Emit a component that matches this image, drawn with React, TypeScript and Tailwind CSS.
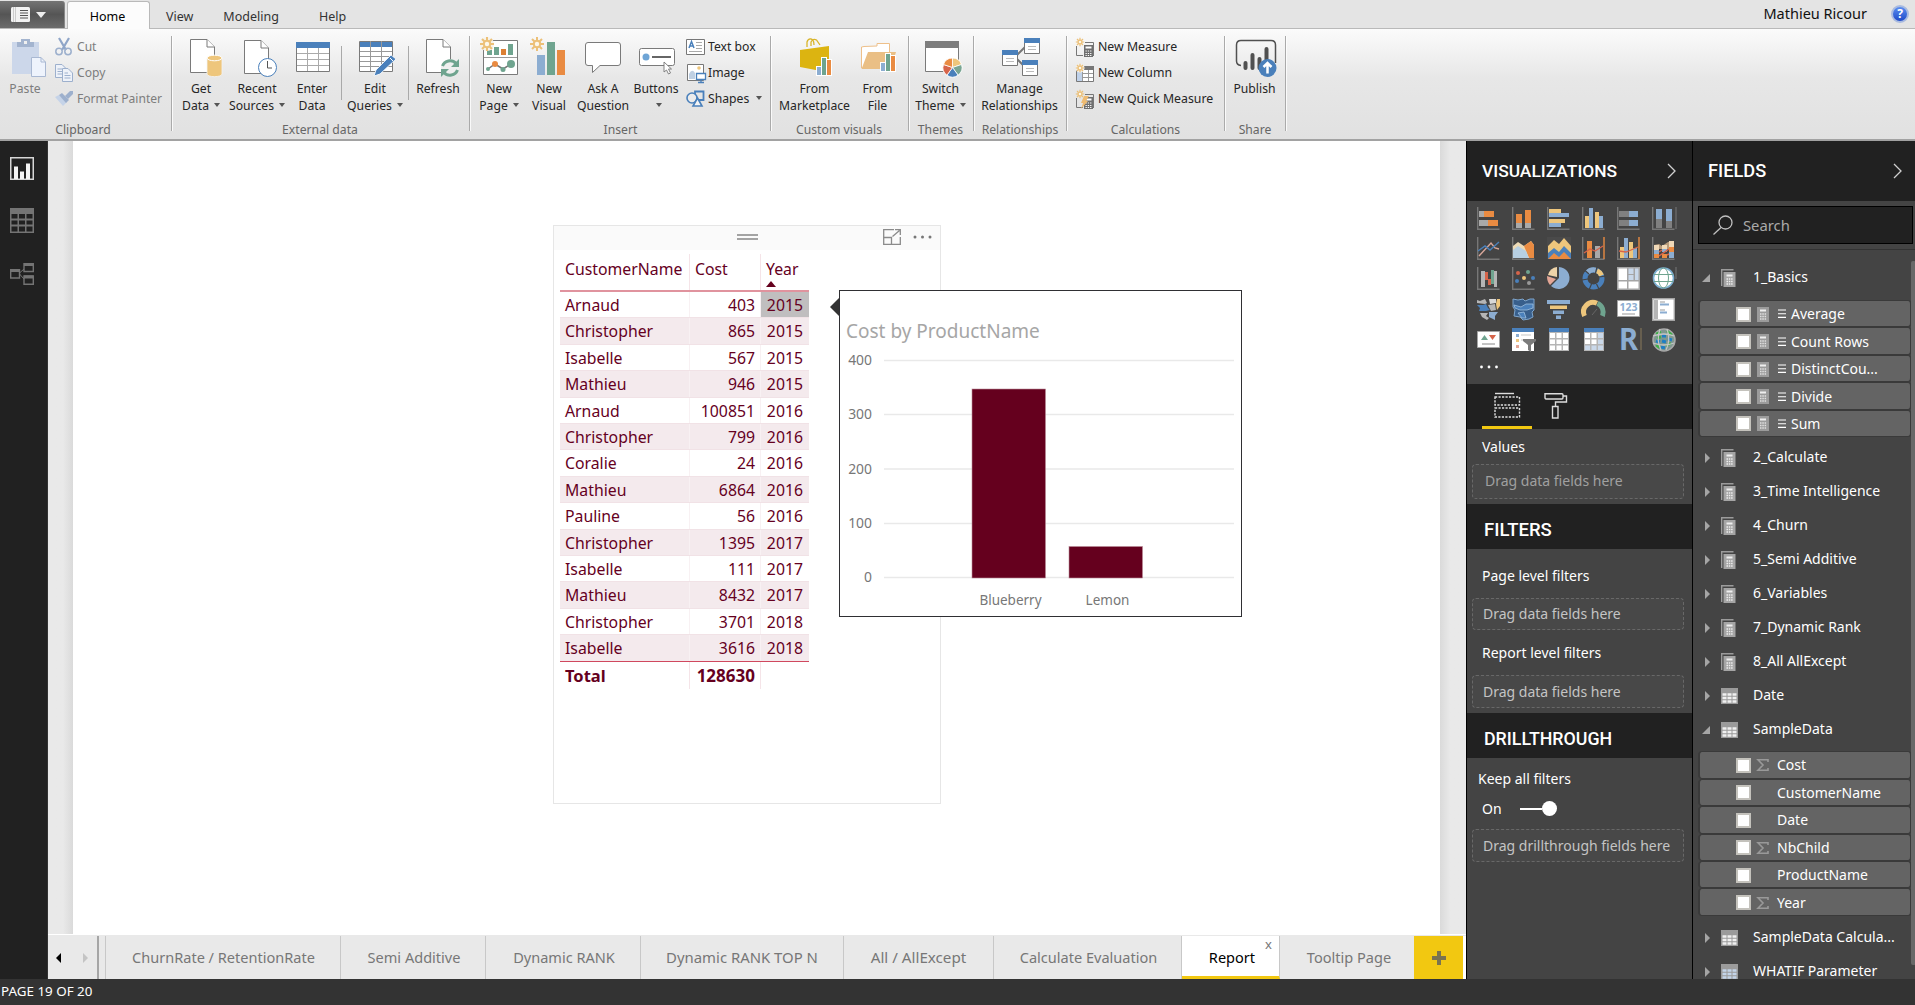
import React from "react";

type Kids = { children?: React.ReactNode };

/* ---------- shared drawing pieces ---------- */

const BLUE = "#4a80bb";
const LBLUE = "#8cadd1";
const ORANGE = "#e98b42";
const SAND = "#eec67c";
const GREEN = "#6fa48f";

function Ico({ w = 40, h = 40, children }: Kids & { w?: number; h?: number }) {
  return (
    <svg width={w} height={h} viewBox={`0 0 ${w} ${h}`} fill="none" className="shrink-0 overflow-visible">
      {children}
    </svg>
  );
}

function Doc({ x, y }: { x: number; y: number }) {
  return (
    <g transform={`translate(${x} ${y})`}>
      <path d="M.5 .5H17L24.5 8V33.5H.5Z" fill="#fff" stroke="#7a7a7a" />
      <path d="M17 .5V8H24.5" stroke="#7a7a7a" fill="#fff" />
    </g>
  );
}

function Sun({ x, y, s = 1 }: { x: number; y: number; s?: number }) {
  return (
    <g transform={`translate(${x} ${y}) scale(${s})`} stroke="#ecc078" strokeWidth="2">
      <path d="M0 -7V7M-7 0H7M-5 -5L5 5M-5 5L5 -5" />
      <circle r="3.2" fill="#fdf7ea" />
    </g>
  );
}

function Bars({ x, y }: { x: number; y: number }) {
  return (
    <g transform={`translate(${x} ${y})`}>
      <path d="M-1 8H4V-1H10V1H15V18H-1Z" fill="#fff" />
      <path d="M0 9H4V17H0Z" fill={LBLUE} />
      <path d="M5 0H9V17H5Z" fill={GREEN} />
      <path d="M10 2H14V17H10Z" fill={ORANGE} />
    </g>
  );
}

/* ---------- ribbon icons ---------- */

const PasteIcon = () => (
  <Ico>
    <path d="M7 5H34V37H7Z" fill="#ccd7ea" />
    <path d="M12 5V10H29V5H25V2H16V5Z" fill="#a3b4cf" />
    <path d="M19 4H22V7H19Z" fill="#f0f0f0" />
    <path d="M26.500 20.500H36L40.500 25V39.500H26.500Z" fill="#eef3fc" stroke="#a9b8d2" />
    <path d="M36 20.500V25H40.500" stroke="#a9b8d2" />
  </Ico>
);
const GetDataIcon = () => (
  <Ico>
    <Doc x={9} y={2} />
    <path d="M26 21V37C26 40.500 41 40.500 41 37V21Z" fill={SAND} stroke="#f4f4f4" strokeWidth=".8" />
    <ellipse cx="33.500" cy="21" rx="7.500" ry="2.800" fill={SAND} stroke="#fff" />
  </Ico>
);
const RecentIcon = () => (
  <Ico>
    <Doc x={7} y={3} />
    <circle cx="30.500" cy="30.500" r="9" fill="#fff" stroke={BLUE} />
    <path d="M30.500 24V31H35" stroke="#555" />
  </Ico>
);
const EnterIcon = () => (
  <Ico>
    <path d="M4.500 10.500H37.500V34.500H4.500Z" fill="#fff" stroke="#7a7a7a" />
    <path d="M4 5H38V11H4Z" fill={BLUE} />
    <path d="M5 16.500H37M5 22.500H37M5 28.500H37M15.500 11V34M26.500 11V34" stroke="#aaa" />
  </Ico>
);
const EditIcon = () => (
  <Ico>
    <path d="M4.500 4.500H37.500V34.500H4.500Z" fill="#fff" stroke="#7a7a7a" />
    <path d="M5 5H37V10H5Z" fill={BLUE} />
    <path d="M5 14.500H37M5 19.500H37M5 24.500H37M5 29.500H37M15.500 4V34M26.500 4V34" stroke="#999" />
    <path d="M19 39L21 33L36 18L41 22L25 37Z" fill={BLUE} stroke="#fff" strokeWidth=".8" />
    <path d="M35 21L38 24" stroke="#fff" />
  </Ico>
);
const RefreshIcon = () => (
  <Ico>
    <Doc x={8} y={2} />
    <circle cx="32" cy="31" r="9" fill="#efefef" />
    <path d="M24.500 29A8 8 0 0 1 38 26.500M39.500 33A8 8 0 0 1 26 35.500" stroke={GREEN} strokeWidth="3" />
    <path d="M41 22V30H33ZM23 40V32H31Z" fill={GREEN} />
  </Ico>
);
const NewPageIcon = () => (
  <Ico>
    <path d="M4.500 3.500H38.500V37.500H4.500Z" fill="#fff" stroke="#7a7a7a" />
    <path d="M5 20.500H38" stroke="#999" />
    <path d="M8 13H13V18H8ZM15 10H20V18H15ZM29 7H34V18H29Z" fill={GREEN} />
    <path d="M22 12H27V18H22Z" fill="#dc8034" />
    <path d="M9 32L16 27L24 32L32 27" stroke="#777" strokeWidth="1.500" />
    <circle cx="9" cy="32" r="2" fill={GREEN} />
    <circle cx="16" cy="27" r="3" fill={ORANGE} />
    <circle cx="24" cy="32.500" r="2.500" fill={GREEN} />
    <circle cx="32" cy="27" r="4" fill={GREEN} />
    <circle cx="8" cy="7" r="7" fill="#f7f3ea" />
    <Sun x={8} y={7} />
  </Ico>
);
const NewVisualIcon = () => (
  <Ico>
    <path d="M8 18H16V38H8Z" fill={LBLUE} />
    <path d="M18 5H26V38H18Z" fill={GREEN} />
    <path d="M28 13H36V38H28Z" fill={ORANGE} />
    <Sun x={8} y={7} />
  </Ico>
);
const AskIcon = () => (
  <Ico>
    <path d="M5 5.500H35Q37.500 5.500 37.500 8V26Q37.500 28.500 35 28.500H17L9.500 35.500V28.500H5Q2.500 28.500 2.500 26V8Q2.500 5.500 5 5.500Z" fill="#fff" stroke="#7a7a7a" />
  </Ico>
);
const ButtonsIcon = () => (
  <Ico>
    <rect x="3.500" y="11.500" width="35" height="17" rx="2" fill="#fff" stroke="#7a7a7a" />
    <circle cx="10" cy="20" r="3.500" fill="#6fa5d6" />
    <path d="M16 20H35" stroke="#666" strokeWidth="2" />
    <path d="M28 25V35L30.500 33L32.500 37L34.500 36L32.500 32H35.500Z" fill="#fff" stroke="#777" strokeWidth=".9" />
  </Ico>
);
const MarketIcon = () => (
  <Ico>
    <path d="M12 10V5Q13 1.500 16 2Q19 2.500 19 8M16 9V5Q18 1 21.500 3L25 8" stroke="#d9b52b" strokeWidth="1.300" />
    <path d="M5 13L34 9V31L26 34L5 30Z" fill="#dcb411" />
    <Bars x={22} y={21} />
  </Ico>
);
const FileIcon = () => (
  <Ico>
    <path d="M3.500 31V10L6 9.500L19 9V6.500H31.500V16" fill="#fff" stroke="#eec08a" />
    <path d="M3.500 32L10 15H38L34 28V32Z" fill="#eabf85" />
    <Bars x={23} y={17} />
  </Ico>
);
const ThemeIcon = () => (
  <Ico>
    <path d="M4.500 4.500H37.500V34.500H4.500Z" fill="#fff" stroke="#7a7a7a" />
    <path d="M4 4H38V11H4Z" fill="#7d7d7d" />
    <circle cx="31.500" cy="30.500" r="10" fill="#fff" />
    <g transform="translate(31.5 30.500)" stroke="#fff" strokeWidth=".8">
      <path d="M0 0V-9.500A9.500 9.500 0 0 1 9 -3Z" fill={SAND} />
      <path d="M0 0L9 -3A9.500 9.500 0 0 1 5.600 7.700Z" fill="#79a593" />
      <path d="M0 0L5.600 7.700A9.500 9.500 0 0 1 -5.600 7.700Z" fill={BLUE} />
      <path d="M0 0L-5.600 7.700A9.500 9.500 0 0 1 -9 -3Z" fill="#d6644a" />
      <path d="M0 0L-9 -3A9.500 9.500 0 0 1 0 -9.500Z" fill={ORANGE} />
    </g>
  </Ico>
);
function RelBox({ x, y }: { x: number; y: number }) {
  return (
    <g transform={`translate(${x} ${y})`}>
      <path d="M.5 .5H15.500V15.500H.5Z" fill="#fff" stroke="#777" />
      <path d="M0 0H16V5H0Z" fill={BLUE} />
      <path d="M4 8.500H12M4 11.500H12" stroke="#bbb" />
    </g>
  );
}
const ManageIcon = () => (
  <Ico>
    <path d="M17 18L25 10M17 22L24 29" stroke="#777" strokeWidth="2" />
    <RelBox x={24} y={1} />
    <RelBox x={2} y={13} />
    <RelBox x={22} y={23} />
  </Ico>
);
const PublishIcon = () => (
  <Ico>
    <path d="M6 28.500Q1.500 28 1.500 24V8Q1.500 3.500 6 3.500H36Q40.500 3.500 40.500 8V26" stroke="#505050" strokeWidth="1.500" />
    <path d="M10.500 26V31M17.500 18V31M24.500 22V31M31.500 12V31" stroke="#505050" strokeWidth="4" strokeLinecap="round" />
    <circle cx="32.500" cy="31" r="9" fill={BLUE} />
    <path d="M32.500 36.500V26.500M28.500 30L32.500 26L36.500 30" stroke="#fff" strokeWidth="2.500" />
  </Ico>
);

const CutIcon = () => (
  <Ico w={18} h={18}>
    <path d="M4 0L11 12M14 0L7 12" stroke="#8fa5c8" strokeWidth="2.200" />
    <circle cx="4" cy="13.500" r="3.200" stroke="#9db0cd" strokeWidth="1.500" />
    <circle cx="13" cy="13.500" r="3.200" stroke="#9db0cd" strokeWidth="1.500" />
  </Ico>
);
const CopyIcon = () => (
  <Ico w={18} h={18}>
    <path d="M.5 .5H7L10.500 4V13.500H.5Z" fill="#eef2f9" stroke="#9db0cd" />
    <path d="M2.500 5H7M2.500 7.500H7M2.500 10H7" stroke="#9db0cd" />
    <path d="M7.500 4.500H13L17.500 9V17.500H7.500Z" fill="#eef2f9" stroke="#9db0cd" />
    <path d="M9.500 9H13M9.500 11.500H15.500M9.500 14H15.500" stroke="#9db0cd" />
  </Ico>
);
const PainterIcon = () => (
  <Ico w={18} h={18}>
    <path d="M0 7L8 16L12 12L4 5Z" fill="#c5d3e8" />
    <path d="M4 5L7 3L14 10L11 13Z" fill="#9db0cd" />
    <path d="M10 6L15 1H18V4L13 9Z" fill="#9db0cd" />
  </Ico>
);
const TextBoxIcon = () => (
  <Ico w={19} h={17}>
    <path d="M.5 .5H18.500V15.500H.5Z" fill="#fff" stroke="#777" />
    <path d="M3 9L5.500 2.500L8 9M4 7H7" stroke={BLUE} strokeWidth="1.500" />
    <path d="M10 3.500H16M10 6.500H16M10 9.500H16M3 12.500H16" stroke="#aaa" />
  </Ico>
);
const ImageIcon = () => (
  <Ico w={19} h={19}>
    <path d="M1.500 .5H17.500V16.500H1.500Z" fill="#fff" stroke="#777" />
    <circle cx="13" cy="4" r="1.800" fill={SAND} />
    <path d="M3 15V10Q6 4 9 9V15Z" fill="#bfd0e3" />
    <path d="M10.500 9.500H19.500V15.500H10.500Z" fill="#fff" stroke={BLUE} strokeWidth="1.300" />
    <path d="M15 16V18.500M12 18.500H18" stroke={BLUE} strokeWidth="1.300" />
  </Ico>
);
const ShapesIcon = () => (
  <Ico w={19} h={18}>
    <path d="M9 1.500H17.500V10H9Z" stroke={BLUE} strokeWidth="1.800" />
    <circle cx="6" cy="8" r="5" fill="#ececec" stroke={BLUE} strokeWidth="1.600" />
    <path d="M11.500 8L16 16H7Z" fill="#f4f4f4" stroke={BLUE} strokeWidth="1.600" />
  </Ico>
);
function Calc({ x, y }: { x: number; y: number }) {
  return (
    <g transform={`translate(${x} ${y})`}>
      <path d="M0 0H9V12H0Z" fill="#6f6f6f" />
      <path d="M1.500 1.500H7.500V3.500H1.500Z" fill="#fff" />
      <path d="M1.500 6H7.500M1.500 8.500H7.500M1.500 10.500H7.500" stroke="#fff" strokeWidth="1.200" strokeDasharray="1.300 1" />
    </g>
  );
}
const MeasureIcon = () => (
  <Ico w={18} h={19}>
    <path d="M.5 8V17.500H7M9 4.500H17.500V18" stroke="#777" />
    <Calc x={8} y={7} />
    <Sun x={4} y={4} s={0.6} />
  </Ico>
);
const ColumnIcon = () => (
  <Ico w={18} h={19}>
    <path d="M.5 2.500H17.500V17.500H.5Z" fill="#fff" stroke="#777" />
    <path d="M1 6H6V17H1Z" fill="#c0d2ea" />
    <path d="M6 2H18V6H6Z" fill="#777" />
    <path d="M6.500 6V17M12.500 6V17M7 9.500H17M7 13.500H17" stroke="#999" />
    <circle cx="4" cy="4" r="4.500" fill="#f2f0ec" />
    <Sun x={4} y={4} s={0.6} />
  </Ico>
);
const QuickIcon = () => (
  <Ico w={18} h={19}>
    <path d="M.5 8V17.500H7M9 4.500H17.500V18" stroke="#777" />
    <Calc x={8} y={7} />
    <path d="M8 6L13 6L10 11H12L5 19L7 13H5Z" fill="#eebb72" />
    <Sun x={4} y={4} s={0.6} />
  </Ico>
);

/* ---------- ribbon ---------- */

const Caret = () => <span className="ml-[5px] inline-block h-0 w-0 border-x-[3px] border-t-4 border-x-transparent border-t-[#555] align-[3px]" />;

function Big({ icon, a, b, caret, w, dim }: { icon: React.ReactNode; a: string; b?: string; caret?: boolean; w: string; dim?: boolean }) {
  return (
    <div className={`flex shrink-0 flex-col items-center pt-[8px] whitespace-nowrap ${w} ${dim ? "text-[#7d7d7d]" : ""}`}>
      {icon}
      <div className="mt-[3px] h-[17px] leading-[17px]">{a}</div>
      <div className="h-[17px] leading-[17px]">
        {b}
        {caret && <Caret />}
      </div>
    </div>
  );
}

function Small({ icon, t, caret }: { icon: React.ReactNode; t: string; caret?: boolean }) {
  return (
    <div className="flex h-[26px] items-center whitespace-nowrap">
      <span className="mr-[3px] flex w-[19px] items-center">{icon}</span>
      {t}
      {caret && <span className="ml-[2px]"><Caret /></span>}
    </div>
  );
}

function Group({ label, w, pad = "", children }: Kids & { label: string; w: string; pad?: string }) {
  return (
    <div className={`flex shrink-0 items-start ${w}`}>
      <div className="flex min-w-0 flex-1 flex-col">
        <div className="flex h-[91px]">{children}</div>
        <div className={`mt-[1px] text-center leading-[18px] text-[#666] ${pad}`}>{label}</div>
      </div>
      <div className="mt-[7px] h-[95px] w-[2px] border-l border-[#aaa] bg-white/80" />
    </div>
  );
}

const Sep = () => <div className="mx-[2px] mt-[17px] h-[54px] w-px shrink-0 bg-[#a9a9a9]" />;

function Ribbon() {
  return (
    <div className="flex h-[113px] shrink-0 border-t border-b-2 border-t-[#b9b9b9] border-b-[#a2a2a2] bg-gradient-to-b from-[#fbfbfb] via-[#e7e7e7] via-45% to-[#e1e1e1] text-[12.2px] text-[#262626]">
      <Group label="Clipboard" w="w-[173px]" pad="pr-[5px]">
        <Big w="w-[50px]" dim icon={<PasteIcon />} a="Paste" />
        <div className="ml-[5px] pt-[5px] text-[12.1px] text-[#7d7d7d]">
          <Small icon={<CutIcon />} t="Cut" />
          <Small icon={<CopyIcon />} t="Copy" />
          <Small icon={<PainterIcon />} t="Format Painter" />
        </div>
      </Group>
      <Group label="External data" w="w-[298px]" pad="pr-[2px]">
        <Big w="w-[56px]" icon={<GetDataIcon />} a="Get" b="Data" caret />
        <Big w="w-[56px]" icon={<RecentIcon />} a="Recent" b="Sources" caret />
        <Big w="w-[54px]" icon={<EnterIcon />} a="Enter" b="Data" />
        <Sep />
        <Big w="w-[62px]" icon={<EditIcon />} a="Edit" b="Queries" caret />
        <Sep />
        <Big w="w-[54px]" icon={<RefreshIcon />} a="Refresh" />
      </Group>
      <Group label="Insert" w="w-[301px]">
        <div className="w-[3px]" />
        <Big w="w-[50px]" icon={<NewPageIcon />} a="New" b="Page" caret />
        <Big w="w-[50px]" icon={<NewVisualIcon />} a="New" b="Visual" />
        <Big w="w-[58px]" icon={<AskIcon />} a="Ask A" b="Question" />
        <Big w="w-[48px]" icon={<ButtonsIcon />} a="Buttons" caret />
        <div className="ml-[6px] pt-[5px]">
          <Small icon={<TextBoxIcon />} t="Text box" />
          <Small icon={<ImageIcon />} t="Image" />
          <Small icon={<ShapesIcon />} t="Shapes" caret />
        </div>
      </Group>
      <Group label="Custom visuals" w="w-[138px]" pad="pr-[2px]">
        <Big w="w-[85px]" icon={<MarketIcon />} a="From" b="Marketplace" />
        <Big w="w-[41px]" icon={<FileIcon />} a="From" b="File" />
      </Group>
      <Group label="Themes" w="w-[65px]" pad="pr-[2px]">
        <Big w="w-[61px]" icon={<ThemeIcon />} a="Switch" b="Theme" caret />
      </Group>
      <Group label="Relationships" w="w-[93px]" pad="pr-[1px]">
        <Big w="w-[89px]" icon={<ManageIcon />} a="Manage" b="Relationships" />
      </Group>
      <Group label="Calculations" w="w-[158px]" pad="pr-px">
        <div className="ml-[8px] pt-[5px] text-[12.3px]">
          <Small icon={<MeasureIcon />} t="New Measure" />
          <Small icon={<ColumnIcon />} t="New Column" />
          <Small icon={<QuickIcon />} t="New Quick Measure" />
        </div>
      </Group>
      <Group label="Share" w="w-[61px]" pad="pr-px">
        <Big w="w-[57px]" icon={<PublishIcon />} a="Publish" />
      </Group>
    </div>
  );
}

function TopTabs() {
  return (
    <div className="flex h-[28px] shrink-0 bg-[#e4e4e4] text-[12.5px] leading-[33px] text-[#333]">
      <div className="mt-px flex w-[65px] items-center justify-center gap-[6px] rounded-tr-[3px] border-r border-[#888] bg-gradient-to-b from-[#747474] via-[#555] via-50% to-[#6c6c6c] pr-[8px]">
        <Ico w={19} h={15}>
          <rect width="19" height="15" rx="1.500" fill="#f2f2f2" />
          <path d="M2.500 0V15M4.500 0V15" stroke="#ccc" />
          <path d="M9 3.500H17M9 6H17M9 8.500H17M9 11H17" stroke="#555" strokeWidth="1.100" />
        </Ico>
        <span className="h-0 w-0 border-x-[5px] border-t-[6px] border-x-transparent border-t-[#eee]" />
      </div>
      <div className="relative z-10 mt-px ml-[2px] h-[28px] w-[83px] rounded-t-[3px] border border-b-0 border-[#b9b9b9] bg-[#fcfcfc] pr-[2px] text-center leading-[30px] text-black">Home</div>
      <div className="ml-[16px]">View</div>
      <div className="ml-[30px]">Modeling</div>
      <div className="ml-[40px]">Help</div>
      <div className="mr-[24px] ml-auto text-[14.5px] leading-[27px] text-[#111]">Mathieu Ricour</div>
      <div className="mt-[5px] mr-[6px] flex h-[18px] w-[18px] items-center justify-center rounded-full border-2 border-[#a9bbe0] bg-gradient-to-b from-[#5c8df0] to-[#1f49c8] text-[12px] leading-none font-bold text-white">?</div>
    </div>
  );
}

/* ---------- left navigation ---------- */

function LeftNav() {
  return (
    <div className="flex w-[48px] shrink-0 flex-col border-r border-[#333] bg-[#212121] pl-[10px]">
      <div className="mt-[16px] h-[51px]">
        <Ico w={24} h={23}>
          <rect x=".75" y=".75" width="22.500" height="21.500" stroke="#d6d6d6" strokeWidth="1.500" />
          <path d="M6 22V9.500M12 22V14.500M18 22V6.500" stroke="#f4f4f4" strokeWidth="4" />
        </Ico>
      </div>
      <div className="h-[54px]">
        <Ico w={24} h={25}>
          <path d="M0 0H24V25H0Z" fill="#747474" />
          <path d="M1.500 6H7.500V10.500H1.500ZM9 6H15V10.500H9ZM16.500 6H22.500V10.500H16.500ZM1.500 12.500H7.500V16.500H1.500ZM9 12.500H15V16.500H9ZM16.500 12.500H22.500V16.500H16.500ZM1.500 18.500H7.500V23.500H1.500ZM9 18.500H15V23.500H9ZM16.500 18.500H22.500V23.500H16.500Z" fill="#212121" />
        </Ico>
      </div>
      <Ico w={24} h={23}>
        <g stroke="#747474" strokeWidth="1.400">
          <path d="M.7 7.700H9.500V16H.7ZM14 1.700H23.300V9.500H14ZM14 14H23.300V22.300H14Z" />
          <path d="M.7 8.500H9.500M14 2.500H23.300M14 15H23.300" strokeWidth="3" />
          <path d="M9.500 11L14 7M9.500 12L14 17" strokeWidth="1" />
        </g>
      </Ico>
    </div>
  );
}

/* ---------- report canvas ---------- */

const ROWS: [string, string, string][] = [
  ["Arnaud", "403", "2015"],
  ["Christopher", "865", "2015"],
  ["Isabelle", "567", "2015"],
  ["Mathieu", "946", "2015"],
  ["Arnaud", "100851", "2016"],
  ["Christopher", "799", "2016"],
  ["Coralie", "24", "2016"],
  ["Mathieu", "6864", "2016"],
  ["Pauline", "56", "2016"],
  ["Christopher", "1395", "2017"],
  ["Isabelle", "111", "2017"],
  ["Mathieu", "8432", "2017"],
  ["Christopher", "3701", "2018"],
  ["Isabelle", "3616", "2018"],
];

function TableVisual() {
  return (
    <div className="absolute top-[84px] left-[480px] flex h-[579px] w-[388px] flex-col border border-[#e6e6e6] text-[15.8px] text-[#65001e]">
      <div className="flex h-[24px] items-center bg-[#fafafa] pr-[7px] pb-[2px]">
        <div className="ml-[183px] h-[6px] w-[21px] border-y-2 border-[#a3a3a3]" />
        <div className="ml-auto flex items-center gap-[12px]">
          <Ico w={18} h={16}>
            <path d="M11 .7H.7V15.300H17.300V8" stroke="#8a8a8a" strokeWidth="1.300" />
            <path d="M.7 8.500H8.500V15M9.500 7.500L16.500 1.500M12 .7H17.300V6" stroke="#8a8a8a" strokeWidth="1.300" />
          </Ico>
          <Ico w={20} h={4}>
            <circle cx="2" cy="2" r="1.500" fill="#777" />
            <circle cx="9.500" cy="2" r="1.500" fill="#777" />
            <circle cx="17" cy="2" r="1.500" fill="#777" />
          </Ico>
        </div>
      </div>
      <div className="mt-[4px] ml-[6px] w-[249px]">
        <div className="flex h-[38px] border-b-2 border-[#e0939e] leading-[30px]">
          <div className="w-[130px] border-r border-[#f5e4e8] pl-[5px]">CustomerName</div>
          <div className="w-[71px] border-r border-[#f5e4e8] pl-[5px]">Cost</div>
          <div className="relative pl-[5px]">
            Year
            <span className="absolute top-[27px] left-[5px] h-0 w-0 border-x-[5.5px] border-b-[6px] border-x-transparent border-b-[#65001e]" />
          </div>
        </div>
        {ROWS.map(([n, c, y], i) => (
          <div key={i} className={`flex h-[26.42px] border-b leading-[27.5px] ${i === 13 ? "border-[#d0485e]" : "border-[#f1e2e6]"} ${i % 2 ? "bg-[#f4eaed]" : "bg-white"}`}>
            <div className="w-[130px] border-r border-[#f8f1f3] pl-[5px]">{n}</div>
            <div className="w-[71px] border-r border-[#f8f1f3] pr-[5px] text-right">{c}</div>
            <div className={`w-[48px] pr-[6px] text-right ${i === 0 ? "bg-[#c0bebf]" : ""}`}>{y}</div>
          </div>
        ))}
        <div className="flex h-[27px] leading-[28px] font-bold">
          <div className="w-[130px] border-r border-[#f5e4e8] pl-[5px] text-[16.5px]">Total</div>
          <div className="w-[71px] border-r border-[#f5e4e8] pr-[5px] text-right text-[17px]">128630</div>
        </div>
      </div>
    </div>
  );
}

function ChartTooltip() {
  const ticks: [number, number][] = [[400, 70.5], [300, 124.5], [200, 179], [100, 233.5], [0, 287.5]];
  return (
    <div className="absolute top-[149px] left-[766px] h-[327px] w-[403px] border border-[#2f2f33] bg-white">
      <span className="absolute top-[7px] left-[-10px] h-0 w-0 border-y-[9px] border-r-[9px] border-y-transparent border-r-[#333]" />
      <svg width="401" height="325" viewBox="1 1 401 325" className="block font-['Noto_Sans',sans-serif] text-[13.9px]" fill="#777">
        <text x="7" y="48" fontSize="19" fill="#a6a6a6">Cost by ProductName</text>
        {ticks.map(([t, y]) => (
          <g key={t}>
            <path d={`M45 ${y}H395`} stroke="#e9e9e9" strokeWidth="1.300" />
            <text x="33" y={y + 4.5} textAnchor="end">{t}</text>
          </g>
        ))}
        <rect x="133" y="99" width="73.500" height="189" fill="#65001e" stroke="#b98a97" strokeWidth=".6" />
        <rect x="230" y="256.500" width="73.500" height="31.500" fill="#65001e" stroke="#b98a97" strokeWidth=".6" />
        <text x="171.500" y="315" textAnchor="middle" fontSize="13.500">Blueberry</text>
        <text x="268.500" y="315" textAnchor="middle" fontSize="13.500">Lemon</text>
      </svg>
    </div>
  );
}

function PageTab({ t, w, active }: { t: string; w: string; active?: boolean }) {
  return (
    <div className={`relative flex h-full shrink-0 items-center justify-center border-r border-[#c8c8c8] whitespace-nowrap ${w} ${active ? "border-b-[3px] border-b-[#f2c811] bg-white pt-[3px] pl-[3px] text-black" : "text-[#777]"}`}>
      {t}
      {active && <span className="absolute top-0 right-[7px] text-[13px] leading-[16px] text-[#777]">x</span>}
    </div>
  );
}

function Canvas() {
  return (
    <div className="flex w-[1418px] shrink-0 flex-col bg-[#e9e9e9]">
      <div className="flex h-[794px] border-b border-white">
        <div className="w-[25px] bg-gradient-to-r from-[#e9e9e9] from-60% to-[#dadada]" />
        <div className="relative w-[1367px] bg-white">
          <TableVisual />
          <ChartTooltip />
        </div>
        <div className="flex-1 bg-gradient-to-l from-[#e9e9e9] from-60% to-[#dadada]" />
      </div>
      <div className="flex h-[44px] pt-px text-[14.55px]">
        <div className="mr-[6px] flex w-[51px] items-center border-r-2 border-[#a6a6a6]">
          <span className="ml-[8px] h-0 w-0 border-y-[5px] border-r-[5px] border-y-transparent border-r-black" />
          <span className="ml-[22px] h-0 w-0 border-y-[5px] border-l-[5px] border-y-transparent border-l-[#c4c4c4]" />
        </div>
        <PageTab t="ChurnRate / RetentionRate" w="w-[236px] border-l pl-px" />
        <PageTab t="Semi Additive" w="w-[145px] pl-[2px]" />
        <PageTab t="Dynamic RANK" w="w-[155px] pl-[2px]" />
        <PageTab t="Dynamic RANK TOP N" w="w-[203px] text-[14.9px]" />
        <PageTab t="All / AllExcept" w="w-[150px] text-[15.2px]" />
        <PageTab t="Calculate Evaluation" w="w-[188px] pl-[2px]" />
        <PageTab t="Report" w="w-[98px]" active />
        <div className="flex w-[134px] items-center justify-center pl-[4px] text-[#777]">Tooltip Page</div>
        <div className="flex w-[49px] items-center justify-center bg-[#f2c811]">
          <Ico w={14} h={14}>
            <path d="M7 0V14M0 7H14" stroke="#7a7350" strokeWidth="4" />
          </Ico>
        </div>
        <div className="flex-1 bg-white" />
      </div>
    </div>
  );
}

/* ---------- visualizations pane ---------- */

const Axis = () => <path d="M.7 0V22.300H22.500" stroke="#777" strokeWidth="1.400" />;
const F = ({ d, c }: { d: string; c: string }) => <path d={d} fill={c} />;

const VIS: React.ReactNode[] = [
  <><Axis /><F d="M2 4H7V10H2ZM2 13H11V19H2Z" c="#a9a9a9" /><F d="M7 4H17V10H7ZM11 13H21V19H11Z" c={ORANGE} /></>,
  <><Axis /><F d="M4 16H10V21H4ZM13 16H19V21H13Z" c="#a9a9a9" /><F d="M4 7H10V16H4ZM13 3H19V16H13Z" c={ORANGE} /></>,
  <><Axis /><F d="M2 2H14V6H2ZM2 12H18V16H2Z" c={SAND} /><F d="M2 6H22V10H2ZM2 16H14V20H2Z" c={LBLUE} /></>,
  <><Axis /><F d="M3 9H7V21H3ZM13 5H17V21H13Z" c={SAND} /><F d="M7 1H11V21H7ZM17 9H21V21H17Z" c={LBLUE} /></>,
  <><Axis /><F d="M2 4H12V10H2ZM2 13H12V19H2Z" c="#808080" /><F d="M12 4H21V10H12ZM12 13H21V19H12Z" c={LBLUE} /></>,
  <><Axis /><F d="M4 12H10V21H4ZM14 14H20V21H14Z" c="#808080" /><F d="M4 2H10V12H4ZM14 2H20V14H14Z" c={LBLUE} /><path d="M24 0V22" stroke="#777" /></>,

  <><Axis /><path d="M2 19L14 6L18 11L22 12" stroke="#d9a79a" strokeWidth="1.400" /><path d="M1 14L8 9L13 13L22 5" stroke={BLUE} strokeWidth="1.400" /></>,
  <><Axis /><F d="M1 9L6 5L12 9L19 4L22 8V21H1Z" c="#ecdab6" /><F d="M12 9L19 4L22 8V21H17Z" c={ORANGE} /><F d="M1 13L6 9L14 14L17 21H1Z" c="#b7cfe2" /></>,
  <><F d="M0 0H24V22H0Z" c="#4a4a4a" /><F d="M1 9L7 3L12 7L17 1L24 9V20H1Z" c={SAND} /><F d="M1 16L7 11L12 15L17 9L24 16V22H1Z" c={BLUE} /><F d="M1 22L7 16L12 20L17 15L24 22Z" c={ORANGE} /></>,
  <><Axis /><F d="M5 4H10V21H5Z" c={ORANGE} /><F d="M13 9H18V21H13Z" c="#a9a9a9" /><path d="M2 16L8 12L13 14L21 9" stroke="#d6644a" strokeWidth="1.300" /><path d="M22 0V22" stroke={ORANGE} strokeWidth="1.400" /></>,
  <><Axis /><F d="M3 10H7V21H3ZM12 5H16V21H12Z" c={SAND} /><F d="M7 1H11V21H7ZM16 11H20V21H16Z" c={LBLUE} /><path d="M2 14L9 15L14 13L21 10" stroke="#d6644a" strokeWidth="1.300" /><path d="M22 0V22" stroke={ORANGE} strokeWidth="1.400" /></>,
  <><Axis /><F d="M2 8L7 7L10 9L16 5L22 4V12H2Z" c="#b79c7c" /><F d="M2 8H7V13H2ZM10 8H15V12H10ZM17 4H22V10H17Z" c="#f0d9b8" /><F d="M2 13H7V17H2ZM10 12H15V15H10ZM17 15H22V21H17Z" c={LBLUE} /><F d="M2 17H7V21H2ZM10 17H15V21H10ZM17 10H22V15H17Z" c={ORANGE} /><path d="M7 15L10 13M7 19L17 12M15 18L17 17" stroke="#d6644a" strokeWidth="1.500" /></>,

  <><Axis /><F d="M4 4H8V20H4ZM17 4H20V20H17Z" c="#b5b5b5" /><F d="M8 5H11V13H8ZM11 12H14V18H11Z" c="#d6644a" /><F d="M14 3H17V17H14Z" c={GREEN} /></>,
  <><Axis /><circle cx="6" cy="6" r="2" fill="#d6644a" /><circle cx="16" cy="5" r="2" fill={GREEN} /><circle cx="12" cy="11" r="2" fill={SAND} /><circle cx="5" cy="14" r="2" fill={BLUE} /><circle cx="21" cy="11" r="2" fill={BLUE} /><circle cx="17" cy="16" r="2" fill="#999" /></>,
  <><path d="M12 11V0A11 11 0 1 1 4 19Z" fill={LBLUE} /><path d="M10 10V0A10 10 0 0 0 1 8Z" fill="#eed3a8" /><path d="M9 12L0 9Q0 15 3 18Z" fill="#e3a696" /></>,
  <><circle cx="11.500" cy="11.500" r="8.500" stroke={BLUE} strokeWidth="5" /><path d="M5.500 5.500A8.500 8.500 0 0 1 14 3.200" stroke={LBLUE} strokeWidth="5" /><path d="M15 3.800A8.500 8.500 0 0 1 19.500 8.500" stroke={SAND} strokeWidth="5" /><path d="M15 0L13.500 6M2.500 3L7 7M0 13L6 12M7 23L9.500 17M17 22L14.500 17M24 9L17 10" stroke="#444" strokeWidth="1.200" /></>,
  <><F d="M0 0H23V23H0Z" c="#a5a5a5" /><F d="M1.500 1.500H10V13H1.500ZM1.500 14.500H10V21.500H1.500ZM11.500 14.500H21.500V21.500H11.500Z" c="#fff" /><F d="M11.500 1.500H16.500V13H11.500ZM18 1.500H21.500V13H18Z" c="#c9d8ea" /><path d="M11 7.500H17" stroke="#a5a5a5" /></>,
  <><circle cx="11.500" cy="11" r="10" fill="#fff" stroke="#7db0d2" strokeWidth="1.600" /><ellipse cx="11.500" cy="11" rx="5" ry="10" stroke="#6fa48f" /><path d="M2 7.500H21M2 14.500H21" stroke="#6fa48f" /><path d="M24 0V12" stroke="#777" /></>,

  <><F d="M0 2L3 3L8 1L10 5L8 6L0 5Z" c="#b5b5b5" /><F d="M0 7H6L9 6L11 10L13 12L9 13H2L3 10Z" c={BLUE} /><F d="M11 7L18 6L19 12L14 13Z" c="#b5b5b5" /><F d="M12 1H19V5L13 6Z" c="#d8d8d8" /><F d="M20 1H23V8L20 12L19 6Z" c={SAND} /><F d="M3 15H11L9 18L12 20L10 22L5 19Z" c="#b5b5b5" /><F d="M12 14H21L18 18V22L12 19Z" c={LBLUE} /></>,
  <><path d="M1 1L6 2L11 1L13 3L18 1H22V12L20 14L21 19L17 21L11 22L8 19L2 18L3 12L1 9Z" fill="#385f8c" stroke="#7ea5cc" /><path d="M2 7L9 9L14 6H21V10L15 12H8L3 10ZM6 15L12 14L14 20H10Z" fill={BLUE} stroke="#9fc0e0" strokeWidth=".8" /></>,
  <><F d="M0 2H23V6H0Z" c={LBLUE} /><F d="M3 7.500H20V11H3Z" c={SAND} /><F d="M6 12.500H17V16H6ZM9 17.500H14V21H9Z" c={LBLUE} /></>,
  <><path d="M2.500 18A9.500 9.500 0 0 1 15 5.300" stroke={SAND} strokeWidth="5" /><path d="M15.500 5.300A10 10 0 0 1 20.500 18" stroke={GREEN} strokeWidth="5" /><path d="M10 17L15 11" stroke="#666" /></>,
  <><path d="M.5 2.500H22.500V18.500H.5Z" fill="#fff" stroke="#a5a5a5" /><text x="11.500" y="12.500" textAnchor="middle" fontSize="10.500" fontWeight="700" fill={LBLUE}>123</text><path d="M5 16H18" stroke="#999" /></>,
  <><path d="M.7 .7H22.300V22.300H.7Z" fill="#fff" stroke="#a5a5a5" strokeWidth="1.400" /><F d="M2 2H6V21H2Z" c="#b5b5b5" /><path d="M8 4H13M8 12H13" stroke="#999" /><path d="M8 6.500H17M8 14.500H15" stroke={LBLUE} strokeWidth="2" /></>,

  <><path d="M.5 3.500H22.500V19.500H.5Z" fill="#fff" stroke="#a5a5a5" /><F d="M4 12L7.500 7L11 12Z" c={GREEN} /><F d="M12 7H19L15.500 12Z" c="#d6644a" /><path d="M5 16H18" stroke="#888" /></>,
  <><F d="M0 1H22V23H0Z" c="#fff" /><F d="M0 0H22V4H0Z" c={BLUE} /><F d="M4 6H7V9H4Z" c={LBLUE} /><F d="M4 11H7V14H4Z" c={SAND} /><F d="M4 17H7V20H4Z" c="#e3a696" /><path d="M9 7H19M9 12H14" stroke="#c5c5c5" /><F d="M11 11H24V13L19 17V24L16 22V17L11 13Z" c="#7b7b7b" /></>,
  <><F d="M2 0H22V23H2Z" c="#b5b5b5" /><F d="M2 0H22V4H2Z" c={BLUE} /><F d="M3 5H8V10H3ZM9.500 5H14.500V10H9.500ZM16 5H21V10H16ZM3 11.500H8V16H3ZM9.500 11.500H14.500V16H9.500ZM16 11.500H21V16H16ZM3 17.500H8V22H3ZM9.500 17.500H14.500V22H9.500ZM16 17.500H21V22H16Z" c="#fff" /></>,
  <><F d="M2 0H22V23H2Z" c="#b5b5b5" /><F d="M2 0H22V4H2Z" c={BLUE} /><F d="M3 5H8V10H3ZM9.500 5H14.500V10H9.500ZM3 11.500H8V16H3ZM9.500 11.500H14.500V16H9.500Z" c="#fff" /><F d="M16 5H21V10H16ZM16 11.500H21V16H16ZM3 17.500H8V22H3ZM9.500 17.500H14.500V22H9.500ZM16 17.500H21V22H16Z" c="#c9d8ea" /></>,
  <><text x="2" y="22" fontSize="30" fontWeight="700" fill={LBLUE} textLength="19" lengthAdjust="spacingAndGlyphs">R</text><path d="M24 0V22" stroke="#8a7a5a" /></>,
  <><circle cx="12" cy="12" r="11" fill="#7f9890" stroke="#a9a9a9" strokeWidth="1.500" /><path d="M4 6L9 4M4 17L8 20M15 3L20 7M14 18L19 15M5 10L9 9" stroke="#3fae49" strokeWidth="2.600" /><path d="M10 8L14 8M4 13L8 14M10 13L14 14M16 11L20 12M9 19L13 20" stroke="#1d7fc4" strokeWidth="3" /><path d="M1 8Q12 4 22 8M1 15Q12 19 22 15M8 1Q4 12 9 22M15 1Q19 12 14 22" stroke="#c5c5c5" strokeWidth="1.300" /></>,
];

const Chevron = () => (
  <Ico w={9} h={16}>
    <path d="M1 1L8 8L1 15" stroke="#d0d0d0" strokeWidth="1.300" />
  </Ico>
);

function Drop({ t, cls }: { t: string; cls: string }) {
  return <div className={`mr-[8px] ml-[5px] flex shrink-0 items-center rounded-[4px] border border-dashed border-[#686868] bg-[#484848] whitespace-nowrap ${cls}`}>{t}</div>;
}

function Visualizations() {
  return (
    <div className="flex w-[227px] shrink-0 flex-col border-x border-black bg-[#444] text-[14px] text-white">
      <div className="flex h-[60px] shrink-0 items-center justify-between bg-[#212121] pr-[16px] pl-[15px] font-['Roboto',sans-serif] text-[17.4px] font-medium">
        VISUALIZATIONS
        <Chevron />
      </div>
      <div className="mt-[6px] ml-[10px] grid grid-cols-[repeat(6,35px)] grid-rows-[repeat(5,30.200px)]">
        {VIS.map((v, i) => (
          <Ico key={i} w={23} h={23}>{v}</Ico>
        ))}
      </div>
      <div className="mt-[7px] ml-[13px] h-[19px]">
        <Ico w={20} h={4}>
          <circle cx="1.500" cy="2" r="1.400" fill="#fff" />
          <circle cx="9" cy="2" r="1.400" fill="#fff" />
          <circle cx="16.500" cy="2" r="1.400" fill="#fff" />
        </Ico>
      </div>
      <div className="flex h-[45px] shrink-0 bg-[#212121] pl-[15px]">
        <div className="flex w-[50px] justify-center border-b-[3px] border-[#f2c811] pt-[8px] pr-px">
          <Ico w={26} h={26}>
            <path d="M1 1.500H20" stroke="#ddd" strokeWidth="1.400" />
            <path d="M1 5H25.500V13H1ZM1 16H25.500V25H1Z" stroke="#ddd" strokeWidth="1.400" strokeDasharray="2.200 1.300" />
          </Ico>
        </div>
        <div className="ml-[12px] pt-[9px]">
          <Ico w={24} h={26}>
            <path d="M1 .8H18Q19 .8 19 2V4.500Q19 6 18 6H2Q1 6 1 4.500Z" stroke="#ddd" strokeWidth="1.400" />
            <path d="M19 3H22.500V9H11.500V14M8.500 13.500H14V25H8.500Z" stroke="#ddd" strokeWidth="1.400" />
          </Ico>
        </div>
      </div>
      <div className="h-[35px] shrink-0 pl-[15px] leading-[36px]">Values</div>
      <Drop t="Drag data fields here" cls="h-[35px] pb-px pl-[12px] text-[#a0a0a0]" />
      <div className="mt-[5px] h-[45px] shrink-0 bg-[#212121] pl-[17px] font-['Roboto',sans-serif] text-[18.5px] leading-[52px] font-medium">FILTERS</div>
      <div className="h-[49px] shrink-0 pl-[15px] leading-[54px]">Page level filters</div>
      <Drop t="Drag data fields here" cls="h-[32px] pl-[10px] text-[#c4c4c4]" />
      <div className="h-[45px] shrink-0 pl-[15px] leading-[46px]">Report level filters</div>
      <Drop t="Drag data fields here" cls="h-[33px] pl-[10px] text-[#c4c4c4]" />
      <div className="mt-[5px] h-[45px] shrink-0 bg-[#212121] pl-[17px] font-['Roboto',sans-serif] text-[17.8px] leading-[52px] font-medium">DRILLTHROUGH</div>
      <div className="h-[36px] shrink-0 pl-[11px] leading-[42px]">Keep all filters</div>
      <div className="flex h-[35px] shrink-0 items-start pl-[15px] leading-[30px]">
        On
        <span className="mt-[14px] ml-[18px] h-[2px] w-[22px] bg-white" />
        <span className="mt-[7px] h-[15px] w-[15px] rounded-full bg-white" />
      </div>
      <Drop t="Drag drillthrough fields here" cls="h-[33px] pl-[10px] text-[#c4c4c4]" />
    </div>
  );
}

/* ---------- fields pane ---------- */

const Check = () => <span className="h-[15px] w-[15px] shrink-0 border-[2.5px] border-[#c4c2bc] bg-white" />;

function CalcGlyph() {
  return (
    <Ico w={12} h={15}>
      <path d="M0 0H12V15H0Z" fill="#9b9b9b" />
      <path d="M3 2.500H9V4.500H3Z" fill="#eee" />
      <path d="M3 7H9.500M3 9.500H9.500M3 12H9.500" stroke="#e0e0e0" strokeWidth="1.400" strokeDasharray="1.500 .8" />
    </Ico>
  );
}

function CalcTableIcon() {
  return (
    <Ico w={16} h={18}>
      <path d="M.7 17V.7H12.500" stroke="#9b9b9b" strokeWidth="1.400" />
      <path d="M2.500 3H14.500V18H2.500Z" fill="#a5a5a5" />
      <path d="M5.500 5.500H11.500V7.500H5.500Z" fill="#eee" />
      <path d="M5.500 10H12M5.500 12.500H12M5.500 15H12" stroke="#eee" strokeWidth="1.400" strokeDasharray="1.500 .8" />
    </Ico>
  );
}

function TableIcon({ blue }: { blue?: boolean }) {
  return (
    <Ico w={17} h={16}>
      <path d="M0 0H17V16H0Z" fill="#9b9b9b" />
      <path d="M1.500 6.500H16M1.500 10H16M1.500 13.500H16" stroke={blue ? "#c3d4e8" : "#f0f0f0"} strokeWidth="2.400" strokeDasharray="4 1" />
    </Ico>
  );
}

function Tree({ t, kind, open, cls = "h-[34px]" }: { t: string; kind: "calc" | "table" | "blue"; open?: boolean; cls?: string }) {
  return (
    <div className={`flex shrink-0 items-center whitespace-nowrap ${cls}`}>
      <span className="flex w-[30px] items-center pl-[9px]">
        {open ? (
          <span className="mt-[3px] h-0 w-0 border-b-[8px] border-l-[8px] border-b-[#a5a5a5] border-l-transparent" />
        ) : (
          <span className="mt-[3px] ml-[3px] h-0 w-0 border-y-[5px] border-l-[5px] border-y-transparent border-l-[#a5a5a5]" />
        )}
      </span>
      <span className="mt-[3px] -ml-[2px] w-[32px]">{kind === "calc" ? <CalcTableIcon /> : <TableIcon blue={kind === "blue"} />}</span>
      {t}
    </div>
  );
}

function Item({ t, mode }: { t: string; mode: "measure" | "sum" | "plain" }) {
  return (
    <div className="mr-[3px] ml-[5px] flex h-[27.450px] items-center rounded-[4px] border-2 border-t-[1px] border-b-[1.500px] border-[#3a3a3a] bg-[#646464] pl-[36px] whitespace-nowrap">
      <span className="mt-px flex"><Check /></span>
      <span className="mt-px ml-[6px] flex w-[20px] items-center">
        {mode === "measure" && <CalcGlyph />}
        {mode === "sum" && (
          <Ico w={12} h={12}>
            <path d="M11 3V.8H1L6 6L1 11.200H11V9" stroke="#999" strokeWidth="1.600" />
          </Ico>
        )}
      </span>
      {mode === "measure" && (
        <span className="mr-[5px] ml-[1px]">
          <Ico w={8} h={9}>
            <path d="M0 1H8M0 4.700H8M0 8.400H8" stroke="#fff" strokeWidth="1.100" />
          </Ico>
        </span>
      )}
      {t}
    </div>
  );
}

function Fields() {
  return (
    <div className="relative flex min-w-0 flex-1 flex-col overflow-hidden bg-[#444] text-[14px] text-white">
      <div className="flex h-[60px] shrink-0 items-center justify-between bg-[#212121] pr-[13px] pl-[15px] font-['Roboto',sans-serif] text-[18.200px] font-medium">
        FIELDS
        <Chevron />
      </div>
      <div className="mt-[5px] mr-[2px] ml-[5px] flex h-[38px] shrink-0 items-center border border-black bg-[#212121] pl-[14px] text-[14.8px] text-[#aaa]">
        <Ico w={20} h={20}>
          <circle cx="12.500" cy="7.500" r="6.500" stroke="#c0c0c0" strokeWidth="1.300" />
          <path d="M8 12.500L.5 19.500" stroke="#c0c0c0" strokeWidth="1.300" />
        </Ico>
        <span className="ml-[10px]">Search</span>
      </div>
      <div className="mt-[5px] h-px shrink-0 bg-[#333]" />
      <Tree t="1_Basics" kind="calc" open cls="mt-[9px] h-[34px]" />
      <div className="mt-[7px]">
        {["Average", "Count Rows", "DistinctCou...", "Divide", "Sum"].map((t) => (
          <Item key={t} t={t} mode="measure" />
        ))}
      </div>
      <div className="mt-[2px]">
        {["2_Calculate", "3_Time Intelligence", "4_Churn", "5_Semi Additive", "6_Variables", "7_Dynamic Rank", "8_All AllExcept"].map((t) => (
          <Tree key={t} t={t} kind="calc" />
        ))}
        <Tree t="Date" kind="table" />
        <Tree t="SampleData" kind="table" open />
      </div>
      <div className="mt-[6px]">
        <Item t="Cost" mode="sum" />
        <Item t="CustomerName" mode="plain" />
        <Item t="Date" mode="plain" />
        <Item t="NbChild" mode="sum" />
        <Item t="ProductName" mode="plain" />
        <Item t="Year" mode="sum" />
      </div>
      <Tree t="SampleData Calcula..." kind="table" cls="mt-[4px] h-[34px]" />
      <Tree t="WHATIF Parameter" kind="blue" />
      <div className="absolute top-[120px] -right-[1px] h-[704px] w-[5px] rounded-[2px] bg-[#686868]" />
    </div>
  );
}

export default function App() {
  return (
    <div className="flex h-[1005px] w-[1915px] flex-col overflow-hidden bg-[#333] font-['Noto_Sans',sans-serif]">
      <TopTabs />
      <Ribbon />
      <div className="flex h-[838px] shrink-0">
        <LeftNav />
        <Canvas />
        <Visualizations />
        <Fields />
      </div>
      <div className="pl-[1px] text-[13.400px] leading-[24px] text-white">PAGE 19 OF 20</div>
    </div>
  );
}
